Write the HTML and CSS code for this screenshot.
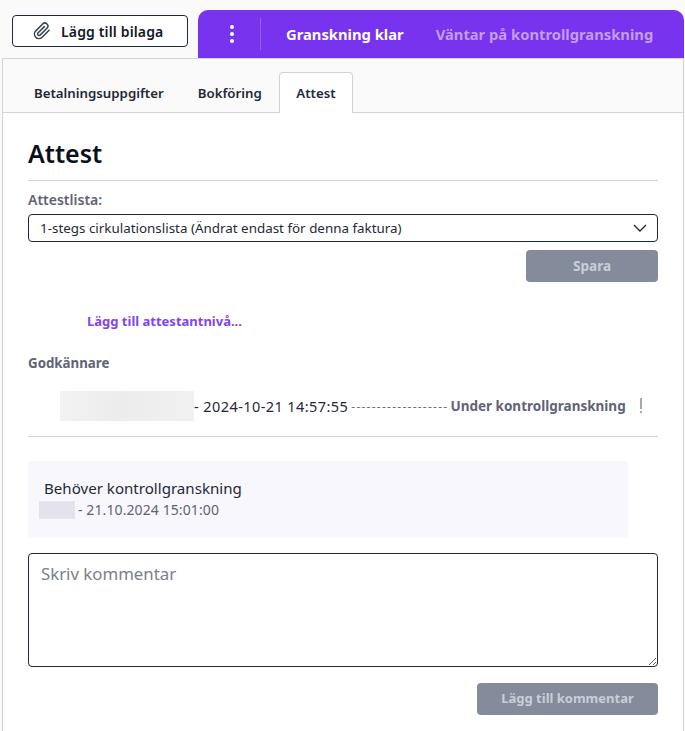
FILE: index.html
```html
<!DOCTYPE html>
<html lang="sv">
<head>
<meta charset="utf-8">
<title>Attest</title>
<link rel="stylesheet" href="styles.css">
</head>
<body>
<div class="topbar">
  <button class="attach" type="button">
    <svg class="clip" width="18" height="18" viewBox="0 0 24 24" fill="none" stroke="#374151" stroke-width="2" stroke-linecap="round" stroke-linejoin="round"><path d="M21.4 11.1l-9.2 9.2a6 6 0 0 1-8.5-8.5l9.2-9.2a4 4 0 0 1 5.7 5.7l-9.2 9.2a2 2 0 0 1-2.8-2.8l8.5-8.5"/></svg>
    <span>Lägg till bilaga</span>
  </button>
  <div class="status">
    <div class="dots"><i></i><i></i><i></i></div>
    <div class="sep"></div>
    <span class="st-active">Granskning klar</span>
    <span class="st-next">Väntar på kontrollgranskning</span>
  </div>
</div>
<div class="panel">
  <div class="tabs">
    <div class="tab">Betalningsuppgifter</div>
    <div class="tab">Bokföring</div>
    <div class="tab current">Attest</div>
  </div>
  <div class="content">
    <h1>Attest</h1>
    <div class="field-label">Attestlista:</div>
    <div class="select">
      <span>1-stegs cirkulationslista (Ändrat endast för denna faktura)</span>
      <svg width="14" height="8" viewBox="0 0 14 8" fill="none" stroke="#1f2937" stroke-width="1.4"><path d="M1 1l6 6 6-6"/></svg>
    </div>
    <div class="actions first"><button class="btn save" type="button">Spara</button></div>
    <a class="add-level">Lägg till attestantnivå...</a>
    <div class="approvers">Godkännare</div>
    <div class="approver">
      <div class="blur-name"></div>
      <span class="when">- 2024-10-21 14:57:55</span>
      <span class="line">-------------------</span>
      <span class="state">Under kontrollgranskning</span>
      <span class="more"></span>
    </div>
    <div class="note">
      <div class="note-title">Behöver kontrollgranskning</div>
      <div class="note-meta"><div class="blur-small"></div><span>- 21.10.2024 15:01:00</span></div>
    </div>
    <textarea class="comment" placeholder="Skriv kommentar"></textarea>
    <div class="actions second"><button class="btn add" type="button">Lägg till kommentar</button></div>
  </div>
</div>
</body>
</html>
```
FILE: styles.css
```css
* { box-sizing: border-box; }
html, body { margin: 0; padding: 0; }
body {
  width: 685px;
  height: 731px;
  overflow: hidden;
  background: #fafafa;
  font-family: "Noto Sans", "Open Sans", sans-serif;
  color: #1f2937;
}
.topbar {
  display: flex;
  align-items: flex-start;
  padding: 10px 1px 0 12px;
  height: 58px;
}
.attach {
  width: 176px;
  height: 32px;
  margin-top: 5px;
  display: flex;
  align-items: center;
  padding: 0 0 0 20px;
  gap: 10px;
  background: #fff;
  border: 1px solid #1f2937;
  border-radius: 4px;
  font: 600 14px "Noto Sans", sans-serif;
  letter-spacing: 0.15px;
  color: #111827;
}
.status {
  margin-left: 10px;
  flex: 1;
  height: 48px;
  background: #7733ee;
  border-radius: 10px 10px 0 0;
  display: flex;
  align-items: center;
  padding-left: 32px;
  font-weight: 700;
  font-size: 14.75px;
}
.dots { display: flex; flex-direction: column; gap: 3px; width: 4px; }
.dots i { width: 4px; height: 4px; border-radius: 50%; background: #fff; display: block; }
.sep { width: 1px; height: 32px; background: #9260f0; margin: 0 25px 0 26px; }
.st-active { color: #fff; }
.st-next { color: #c79cf0; margin-left: 32px; }
.panel {
  margin-left: 2px;
  margin-right: 1px;
  height: 673px;
  border-left: 1px solid #d1d5db;
  border-right: 1px solid #d1d5db;
  border-top: 1px solid #d1d5db;
  background: #fff;
}
.tabs {
  height: 54px;
  padding: 13px 0 0 14px;
  display: flex;
  align-items: stretch;
  background: #fafafa;
  border-bottom: 1px solid #d1d5db;
}
.tab {
  padding: 0 17px;
  display: flex;
  align-items: center;
  font-size: 13.25px;
  font-weight: 600;
  color: #1f2937;
  height: 41px;
}
.tab.current {
  background: #fff;
  border: 1px solid #d1d5db;
  border-bottom: none;
  border-radius: 4px 4px 0 0;
  padding: 0 16.5px;
}
.content { padding: 0 25px; }
h1 {
  margin: 0;
  height: 68px;
  padding-top: 22px;
  font-size: 25px;
  line-height: 36px;
  font-weight: 600;
  color: #0b0f1a;
  border-bottom: 1px solid #d1d5db;
}
.field-label {
  margin-top: 10px;
  font-size: 14px;
  line-height: 18px;
  font-weight: 600;
  color: #5f6377;
}
.select {
  margin-top: 5px;
  height: 28px;
  border: 1px solid #1f2937;
  border-radius: 4px;
  display: flex;
  align-items: center;
  justify-content: space-between;
  padding: 0 10px 0 11px;
  font-size: 13.4px;
  color: #1f2937;
}
.actions { display: flex; justify-content: flex-end; }
.actions.first { margin-top: 8px; }
.actions.second { margin-top: 16px; }
.btn {
  height: 32px;
  border: none;
  border-radius: 4px;
  background: #848b9b;
  color: #c9ced8;
  font: 700 13px "Noto Sans", sans-serif;
  padding: 0 0 2px;
}
.save { width: 132px; font-size: 13.6px; }
.add { width: 181px; }
.add-level {
  display: block;
  margin: 30px 0 0 59px;
  font-size: 13px;
  line-height: 18px;
  font-weight: 700;
  color: #8044f2;
}
.approvers {
  margin-top: 24px;
  font-size: 13.3px;
  line-height: 18px;
  font-weight: 700;
  color: #5f6377;
}
.approver {
  margin-top: 19px;
  height: 46px;
  padding: 0 0 15px 32px;
  display: flex;
  align-items: center;
  border-bottom: 1px solid #d1d5db;
  font-size: 13.5px;
}
.blur-name {
  width: 134px;
  height: 30px;
  background: linear-gradient(100deg, #f3f3f3, #ececec 45%, #f1f1f1);
}
.when { color: #1f2937; font-size: 14.5px; letter-spacing: 0.42px; }
.line { color: #6b7280; margin-left: 3px; font-size: 12px; letter-spacing: 1.25px; }
.state { margin-left: 2px; font-weight: 700; color: #5f6377; }
.more {
  margin-left: 14px;
  width: 2px;
  height: 11px;
  margin-top: -5px;
  background: #a3a8b3;
  position: relative;
}
.more::after {
  content: "";
  position: absolute;
  left: 0;
  top: 13px;
  width: 2px;
  height: 2px;
  background: #a3a8b3;
}
.note {
  margin-top: 24px;
  width: 600px;
  height: 76px;
  background: #f8f7fd;
  padding: 18px 0 0 16px;
}
.note-title { font-size: 15.1px; line-height: 19px; color: #1f2937; }
.note-meta {
  display: flex;
  align-items: center;
  margin: 2px 0 0 -5px;
  font-size: 14px;
  letter-spacing: 0.1px;
  color: #5f6377;
}
.blur-small { width: 36px; height: 18px; background: #e4e2ec; margin-right: 3px; }
.comment {
  display: block;
  margin-top: 16px;
  width: 630px;
  height: 114px;
  border: 1px solid #1f2937;
  border-radius: 4px;
  padding: 8px 12px;
  font: 400 16.8px "Noto Sans", sans-serif;
  background: #fff;
  outline: none;
}
.comment::placeholder { color: #7a7f8a; opacity: 1; }
```
